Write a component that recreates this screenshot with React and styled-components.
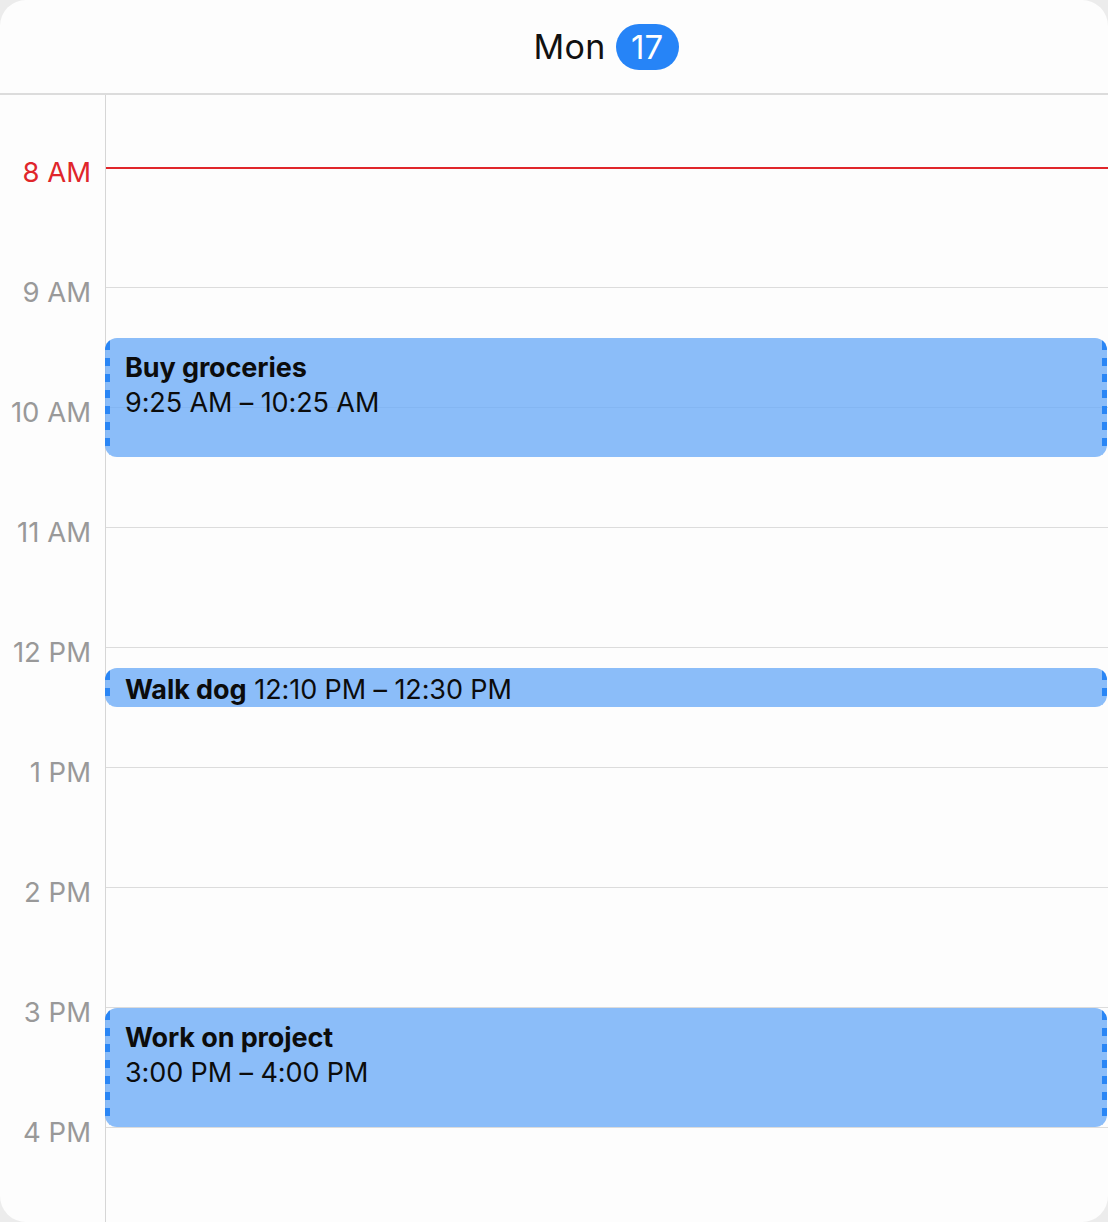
import React from "react";
import styled, { createGlobalStyle } from "styled-components";

const HOUR_HEIGHT = 120;
const FIRST_HOUR = 8;
const TOP_OFFSET = 73;

const hours = ["8 AM", "9 AM", "10 AM", "11 AM", "12 PM", "1 PM", "2 PM", "3 PM", "4 PM"];

const events = [
  { title: "Buy groceries", time: "9:25 AM – 10:25 AM", start: 9 + 25 / 60, end: 10 + 25 / 60 },
  { title: "Walk dog", time: "12:10 PM – 12:30 PM", start: 12 + 10 / 60, end: 12.5, inline: true },
  { title: "Work on project", time: "3:00 PM – 4:00 PM", start: 15, end: 16 },
];

const GlobalStyle = createGlobalStyle`
  html, body {
    margin: 0;
    background: #ececec;
  }
  body {
    font-family: Inter, "Noto Sans", sans-serif;
  }
`;

const Frame = styled.div`
  width: 1108px;
  height: 1222px;
  border-radius: 26px;
  overflow: hidden;
  background: #fdfdfd;
  display: flex;
  flex-direction: column;
`;

const Header = styled.div`
  height: 93px;
  flex-shrink: 0;
  border-bottom: 2px solid #dcdcdc;
  display: flex;
  align-items: center;
  justify-content: center;
  gap: 10px;
  padding-left: 104px;
`;

const DayName = styled.span`
  font-size: 34px;
  color: #111;
  letter-spacing: 0.3px;
`;

const DayBadge = styled.span`
  height: 46px;
  min-width: 63px;
  box-sizing: border-box;
  border-radius: 23px;
  background: #2684f7;
  color: #fff;
  font-size: 33px;
  display: flex;
  align-items: center;
  justify-content: center;
`;

const Body = styled.div`
  flex: 1;
  display: grid;
  grid-template-columns: 106px 1fr;
  overflow: hidden;
`;

const Gutter = styled.div`
  border-right: 1px solid #d6d6d6;
  padding-top: ${TOP_OFFSET}px;
`;

const HourLabel = styled.div`
  height: ${HOUR_HEIGHT}px;
  box-sizing: border-box;
  text-align: right;
  padding-right: 14px;
  font-size: 27.5px;
  line-height: 28px;
  color: ${(p) => (p.$now ? "#e0262b" : "#999")};
  transform: translateY(-10px);
`;

const Day = styled.div`
  position: relative;
  padding-top: ${TOP_OFFSET - 1}px;
`;

const HourSlot = styled.div`
  height: ${HOUR_HEIGHT}px;
  box-sizing: border-box;
  border-top: ${(p) => (p.$now ? "2px solid #e0262b" : "1.5px solid #dcdcdc")};
`;

const Event = styled.div`
  position: absolute;
  left: -1px;
  right: 1px;
  border-radius: 12px;
  overflow: hidden;
  background: rgba(110, 173, 248, 0.8);
  box-sizing: border-box;
  padding: ${(p) => (p.$inline ? "3px 20px 0" : "12px 20px")};
  display: flex;
  flex-direction: ${(p) => (p.$inline ? "row" : "column")};
  align-items: ${(p) => (p.$inline ? "center" : "flex-start")};
  gap: ${(p) => (p.$inline ? "8px" : "0")};
  color: #0c0c0c;

  &::before,
  &::after {
    content: "";
    position: absolute;
    top: 0;
    bottom: 0;
    width: 5px;
    background: repeating-linear-gradient(
      to bottom,
      #2a86f5 0 8px,
      transparent 8px 16px
    );
    background-position: 0 4px;
  }
  &::before {
    left: 0;
  }
  &::after {
    right: 0;
  }
`;

const EventTitle = styled.span`
  font-size: 27px;
  line-height: 35px;
  font-weight: 700;
  letter-spacing: -0.1px;
`;

const EventTime = styled.span`
  font-size: 27px;
  line-height: 35px;
  letter-spacing: -0.1px;
`;

const App = () => {
  return (
    <>
      <GlobalStyle />
      <Frame>
        <Header>
          <DayName>Mon</DayName>
          <DayBadge>17</DayBadge>
        </Header>
        <Body>
          <Gutter>
            {hours.map((h, i) => (
              <HourLabel key={h} $now={i === 0}>
                {h}
              </HourLabel>
            ))}
          </Gutter>
          <Day>
            {hours.map((h, i) => (
              <HourSlot key={h} $now={i === 0} />
            ))}
            {events.map((ev) => {
              const top = TOP_OFFSET + (ev.start - FIRST_HOUR) * HOUR_HEIGHT;
              const height = Math.max(39, (ev.end - ev.start) * HOUR_HEIGHT - 1);
              return (
                <Event
                  key={ev.title}
                  $inline={ev.inline}
                  style={{ top: `${top}px`, height: `${height}px` }}
                >
                  <EventTitle>{ev.title}</EventTitle>
                  <EventTime>{ev.time}</EventTime>
                </Event>
              );
            })}
          </Day>
        </Body>
      </Frame>
    </>
  );
};

export default App;
